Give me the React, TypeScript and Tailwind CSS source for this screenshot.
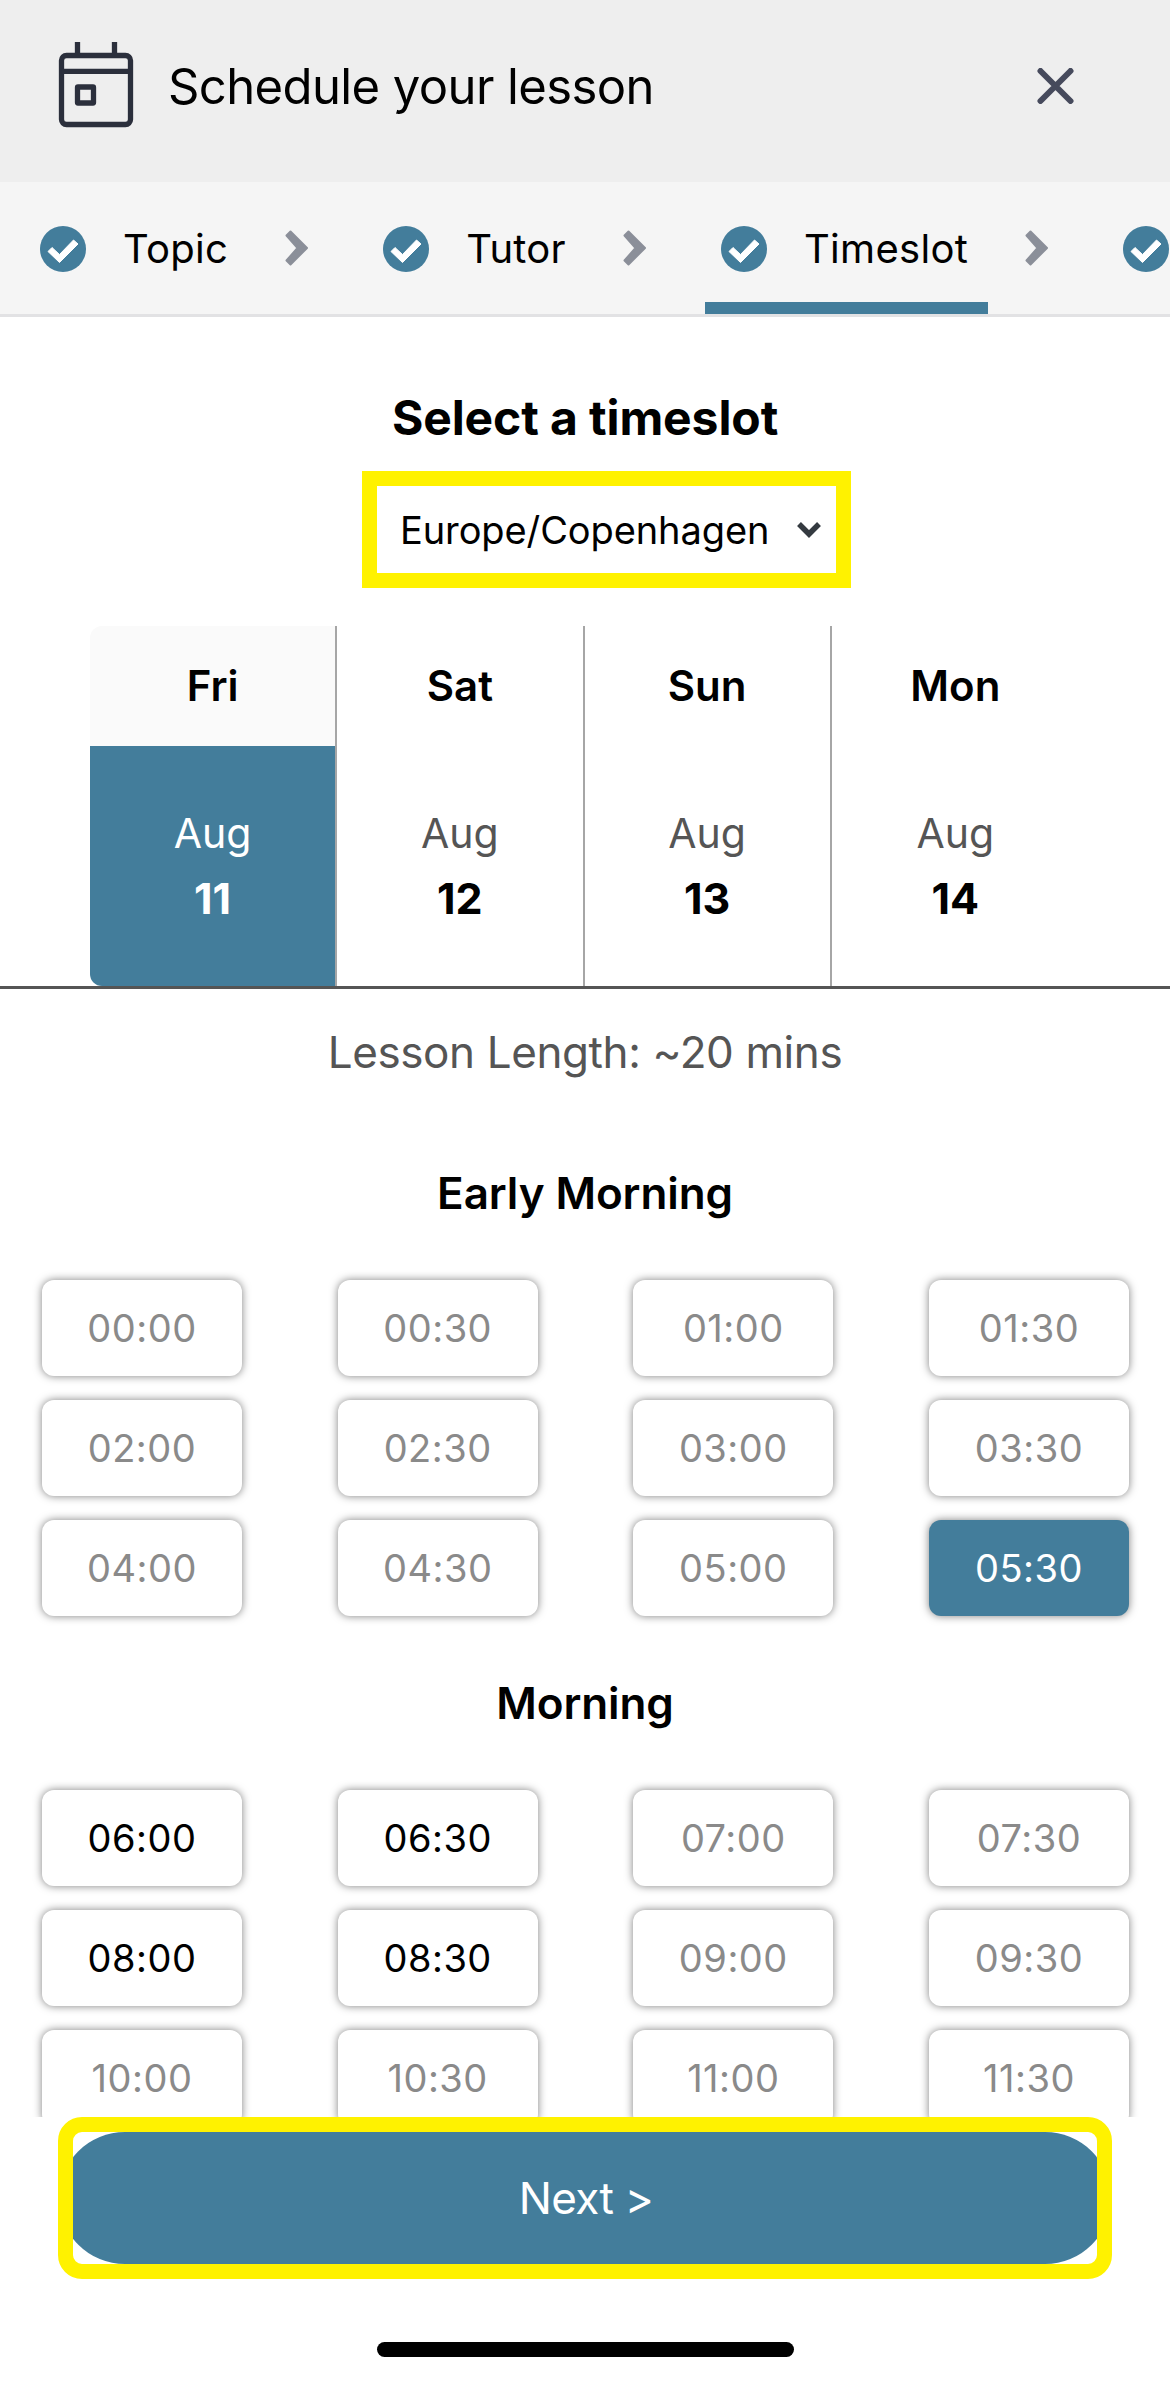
import { Fragment, useState } from "react";
import clsx from "clsx";

interface Slot {
  time: string;
  available: boolean;
}

interface Period {
  title: string;
  slots: Slot[];
}

// The last step is off screen apart from its icon
const steps = ["Topic", "Tutor", "Timeslot", ""];

const days = [
  { weekday: "Fri", month: "Aug", date: 11 },
  { weekday: "Sat", month: "Aug", date: 12 },
  { weekday: "Sun", month: "Aug", date: 13 },
  { weekday: "Mon", month: "Aug", date: 14 },
];

const openSlots = ["05:30", "06:00", "06:30", "08:00", "08:30"];

// Half-hour slots from one hour up to (not including) another
function buildSlots(from: number, to: number): Slot[] {
  const slots: Slot[] = [];
  for (let hour = from; hour < to; hour++) {
    for (const minute of ["00", "30"]) {
      const time = `${String(hour).padStart(2, "0")}:${minute}`;
      slots.push({ time, available: openSlots.includes(time) });
    }
  }
  return slots;
}

const periods: Period[] = [
  { title: "Early Morning", slots: buildSlots(0, 6) },
  { title: "Morning", slots: buildSlots(6, 12) },
];

function CalendarIcon() {
  return (
    <svg className="mb-[2px]" width="76" height="86" viewBox="0 0 76 86" fill="none" stroke="#2b2f3c" strokeWidth="5.3">
      <rect x="3.5" y="13.5" width="69" height="69" rx="5" />
      <path d="M3.5 29.3H72.5M19.5 0V13M56.5 0V13" />
      <rect x="19.5" y="45" width="16" height="16" rx="0.5" />
    </svg>
  );
}

function CheckIcon() {
  return (
    <svg className="shrink-0" width="46" height="46" viewBox="0 0 46 46" fill="none">
      <circle cx="23" cy="23" r="23" fill="#437d9b" />
      <path d="M8 25.5L12 21.5L19.5 28.5L33.5 14L38 18L19.5 36.5Z" fill="#fff" stroke="#fff" strokeLinejoin="round" />
    </svg>
  );
}

function StepArrow() {
  return (
    <svg className="shrink-0" width="24" height="36" viewBox="0 0 24 36" fill="none">
      <path
        d="M5.5 1.5L22 18L5.5 34.5L1.5 30.5L12.5 18L1.5 5.5Z"
        fill="#8b8f99"
        stroke="#8b8f99"
        strokeWidth="2"
        strokeLinejoin="round"
      />
    </svg>
  );
}

function StepBar({ current }: { current: string }) {
  return (
    <nav className="flex h-[135px] shrink-0 overflow-hidden border-b-[3px] border-[#e2e2e4] bg-[#f5f5f5] pl-[24px]">
      {steps.map((step, i) => (
        <Fragment key={step}>
          {i > 0 && (
            <div className="flex w-[119px] shrink-0 items-center pb-px pl-[37px]">
              <StepArrow />
            </div>
          )}
          <div
            className={clsx(
              "flex shrink-0 items-center gap-[37px] border-b-[12px] pt-[13px] pr-[20px] pl-[16px] text-[40px] tracking-[0.3px]",
              step === current ? "border-[#437d9b]" : "border-transparent"
            )}
          >
            <CheckIcon />
            {step && <span>{step}</span>}
          </div>
        </Fragment>
      ))}
    </nav>
  );
}

export default function App() {
  const [selectedDate, setSelectedDate] = useState(11);
  const [selectedTime, setSelectedTime] = useState("05:30");

  return (
    <div className="flex h-[2381px] w-[1170px] flex-col overflow-hidden bg-white font-['Inter',sans-serif] text-black">
      <header className="flex h-[182px] shrink-0 items-center bg-[#eeeeee] pr-[96px] pb-[10px] pl-[58px]">
        <CalendarIcon />
        <h1 className="ml-[34px] pt-[2px] text-[49px] leading-[60px] tracking-[-0.6px]">
          Schedule your lesson
        </h1>
        <button className="ml-auto" aria-label="Close">
          <svg width="37" height="36" viewBox="0 0 37 36" fill="none">
            <path d="M3.5 3L33.5 33M33.5 3L3.5 33" stroke="#464a5c" strokeWidth="6" strokeLinecap="round" />
          </svg>
        </button>
      </header>

      <StepBar current="Timeslot" />

      <main className="flex h-[1800px] shrink-0 flex-col overflow-hidden">
        <h2 className="mt-[71px] text-center text-[48px] leading-[60px] font-bold tracking-[-0.1px]">
          Select a timeslot
        </h2>

        <button className="mt-[23px] ml-[362px] flex h-[117px] w-[489px] shrink-0 items-center justify-between border-[15px] border-[#fff200] pr-[14px] pl-[23px] text-[38px] tracking-[-0.1px]">
          <span className="pt-[2px]">Europe/Copenhagen</span>
          <svg width="26" height="18" viewBox="0 0 26 18" fill="none">
            <path d="M3 3L13 13L23 3" stroke="#343a40" strokeWidth="5.5" />
          </svg>
        </button>

        {/* Day picker */}
        <div className="mt-[38px] shrink-0 border-b-[3px] border-[#555555] pr-[91px] pl-[90px]">
          <div className="grid grid-cols-4">
            {days.map((day) => {
              const active = day.date === selectedDate;
              return (
                <button
                  key={day.date}
                  onClick={() => setSelectedDate(day.date)}
                  className="border-r-2 border-[#a6a6a6] text-center last:border-r-0"
                >
                  <div
                    className={clsx(
                      "h-[120px] pt-[31px] text-[42px] leading-[58px] font-semibold",
                      active && "rounded-tl-[12px] bg-[#fafafa]"
                    )}
                  >
                    {day.weekday}
                  </div>
                  <div
                    className={clsx(
                      "h-[240px] pt-[55px]",
                      active ? "rounded-bl-[12px] bg-[#437d9b] text-white" : "text-black"
                    )}
                  >
                    <div className={clsx("text-[41px] leading-[64px]", !active && "text-[#555555]")}>
                      {day.month}
                    </div>
                    <div className="text-[43px] leading-[66px] font-bold">{day.date}</div>
                  </div>
                </button>
              );
            })}
          </div>
        </div>

        <p className="mt-[33px] text-center text-[44px] leading-[60px] tracking-[-0.4px] text-[#555555]">
          Lesson Length: ~20 mins
        </p>

        {/* Timeslots grouped by part of the day */}
        {periods.map((period) => (
          <section key={period.title} className="shrink-0 pt-[57px] first-of-type:pt-[81px]">
            <h3 className="text-center text-[44px] leading-[60px] font-semibold tracking-[-0.1px]">
              {period.title}
            </h3>
            <div className="mt-[57px] grid grid-cols-[repeat(4,200px)] justify-between gap-y-[24px] pr-[41px] pl-[42px]">
              {period.slots.map((slot) => (
                <button
                  key={slot.time}
                  disabled={!slot.available}
                  onClick={() => setSelectedTime(slot.time)}
                  className={clsx(
                    "h-[96px] rounded-[12px] text-[38px] tracking-[0.5px] shadow-[0_0_9px_rgba(0,0,0,0.5)]",
                    slot.time === selectedTime
                      ? "bg-[#437d9b] text-white"
                      : slot.available
                        ? "bg-white text-black"
                        : "bg-white text-[#8a8a8a]"
                  )}
                >
                  {slot.time}
                </button>
              ))}
            </div>
          </section>
        ))}
      </main>

      <footer className="flex shrink-0 flex-col items-center">
        <div className="h-[162px] w-[1054px] overflow-hidden rounded-[24px] border-[15px] border-[#fff200]">
          <button className="-mx-[14px] h-[132px] w-[1052px] rounded-full bg-[#437d9b] pl-[2px] text-[44px] tracking-[-0.7px] text-white">
            Next &gt;
          </button>
        </div>
        <div className="mt-[63px] h-[15px] w-[417px] rounded-full bg-black" />
      </footer>
    </div>
  );
}
